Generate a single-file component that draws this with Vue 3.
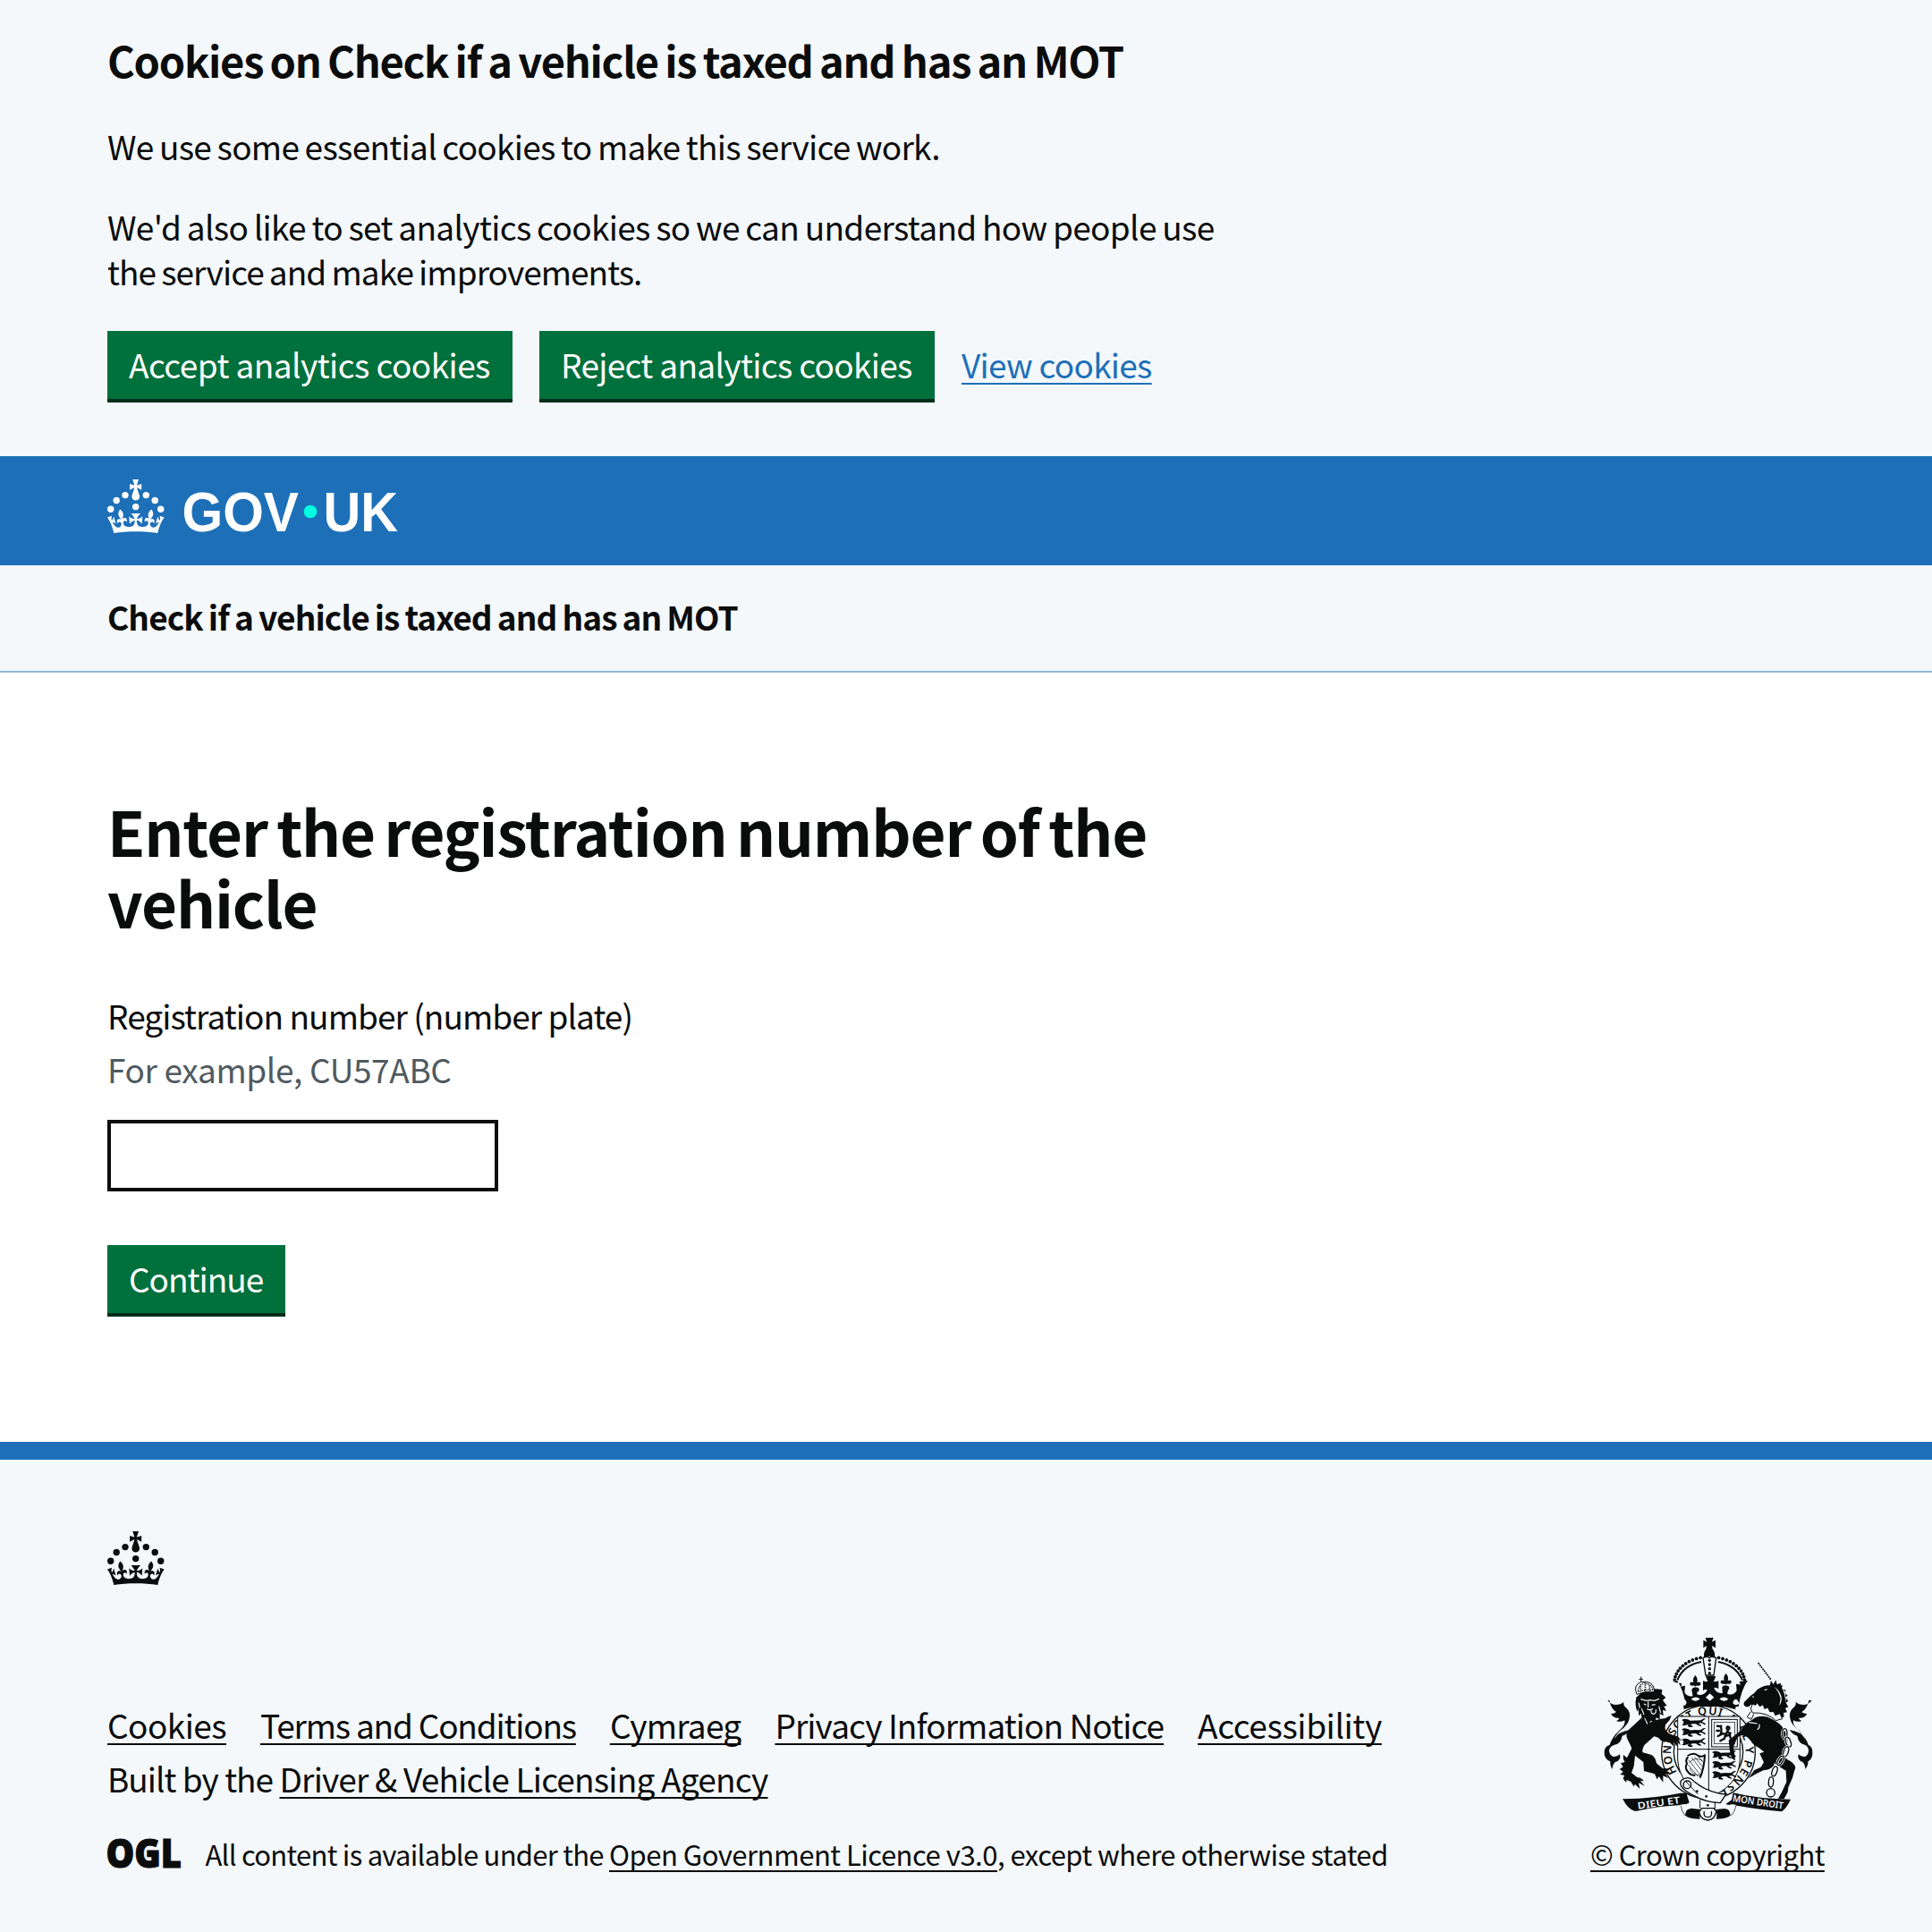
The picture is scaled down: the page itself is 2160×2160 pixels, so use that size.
<script setup>
const serviceName = 'Check if a vehicle is taxed and has an MOT'

const footerLinks = [
  { label: 'Cookies', cls: 'lk-cookies' },
  { label: 'Terms and Conditions', cls: 'lk-terms' },
  { label: 'Cymraeg', cls: 'lk-cymraeg' },
  { label: 'Privacy Information Notice', cls: 'lk-privacy' },
  { label: 'Accessibility', cls: 'lk-access' },
]

// Charges of the quartered shield: three lions passant per quarter
const lionRows = [
  { x: 328, y: 334 }, { x: 328, y: 366 }, { x: 328, y: 400 },
  { x: 430, y: 442 }, { x: 430, y: 476 }, { x: 430, y: 510 },
]

// Pearls along the arches of the large crown
const pearls = []
for (let i = 0; i < 11; i++) {
  const a = (Math.PI / 180) * (6 + i * 6.9)
  const dx = 118 * Math.cos(a)
  const dy = 86 * Math.sin(a)
  pearls.push({ x: 424 - dx, y: 212 - dy }, { x: 424 + dx, y: 212 - dy })
}

const chain = [
  [676, 384, 0], [688, 412, -20], [680, 444, 18], [662, 474, 30], [642, 510, 20], [630, 546, 4],
]
</script>

<template>
  <div class="page">
    <svg class="defs" width="0" height="0" aria-hidden="true">
      <symbol id="crown" viewBox="0 0 64 60">
        <circle cx="20" cy="17.6" r="3.7" />
        <circle cx="10.2" cy="23.5" r="3.7" />
        <circle cx="3.7" cy="33.2" r="3.7" />
        <circle cx="31.7" cy="30.6" r="3.7" />
        <circle cx="43.3" cy="17.6" r="3.7" />
        <circle cx="53.2" cy="23.5" r="3.7" />
        <circle cx="59.7" cy="33.2" r="3.7" />
        <path d="M33.1,9.8c.2-.1.3-.3.5-.5l4.6,2.4v-6.8l-4.6,1.5c-.1-.2-.3-.3-.5-.5l1.9-5.9h-6.7l1.9,5.9c-.2.1-.3.3-.5.5l-4.6-1.5v6.8l4.6-2.4c.1.2.3.3.5.5l-2.6,8c-.9,2.8,1.2,5.7,4.1,5.7h0c3,0,5.1-2.9,4.1-5.7l-2.6-8ZM37,37.9s-3.4,3.8-4.1,6.1c2.2,0,4.2-.5,6.4-2.8l-.7,8.5c-2-2.8-4.4-4.1-5.7-3.8.1,3.1.5,6.7,5.8,7.2,3.7.3,6.7-1.5,7-3.8.4-2.6-2-4.3-3.7-1.6-1.4-4.5,2.4-6.1,4.9-3.2-1.9-4.5-1.8-7.7,2.4-10.9,3,4,2.6,7.3-1.2,11.1,2.4-1.3,6.2,0,4,4.6-1.2-2.8-3.7-2.2-4.2.2-.3,1.7.7,3.7,3,4.2,1.9.3,4.7-.9,7-5.9-1.3,0-2.4.7-3.9,1.7l2.4-8c.6,2.3,1.4,3.7,2.2,4.5.6-1.6.5-2.8,0-5.3l5,1.8c-2.6,3.6-5.2,8.7-7.3,17.5-7.4-1.1-15.7-1.7-24.5-1.7h0c-8.8,0-17.1.6-24.5,1.7-2.1-8.9-4.7-13.9-7.3-17.5l5-1.8c-.5,2.5-.6,3.7,0,5.3.8-.8,1.6-2.3,2.2-4.5l2.4,8c-1.5-1-2.6-1.7-3.9-1.7,2.3,5,5.2,6.2,7,5.9,2.3-.4,3.3-2.4,3-4.2-.5-2.4-3-3.1-4.2-.2-2.2-4.6,1.6-6,4-4.6-3.7-3.7-4.2-7.1-1.2-11.1,4.2,3.2,4.3,6.4,2.4,10.9,2.5-2.8,6.3-1.3,4.9,3.2-1.8-2.7-4.1-1-3.7,1.6.3,2.3,3.3,4.1,7,3.8,5.4-.5,5.7-4.2,5.8-7.2-1.3-.2-3.7,1-5.7,3.8l-.7-8.5c2.2,2.3,4.2,2.7,6.4,2.8-.7-2.3-4.1-6.1-4.1-6.1h10.6Z" />
      </symbol>
      <symbol id="passant" viewBox="0 0 86 32" overflow="visible">
        <path d="M0 4q8-6 18-3 10 2 12 6 14-2 28-1 12 0 16-5 6-4 12 0-7 0-9 5l-5 5q8 3 14 8l-4 3q-8-7-16-7l-6 3 10 5-2 4q-12-3-17-9l-14 0-6 4 9 4-3 4q-14 0-16-6l4-5q-7 4-12 4-6 3-13-1l6-3q-4-5 2-8z" />
      </symbol>
    </svg>

    <section class="cookie-banner">
      <div class="container">
        <h2 class="banner-title">Cookies on {{ serviceName }}</h2>
        <p class="banner-essential">We use some essential cookies to make this service work.</p>
        <p class="banner-analytics">
          <span class="l1">We'd also like to set analytics cookies so we can understand how people use</span><br />
          <span class="l2">the service and make improvements.</span>
        </p>
        <div class="banner-actions">
          <button class="btn accept" type="button">Accept analytics cookies</button>
          <button class="btn reject" type="button">Reject analytics cookies</button>
          <a class="view">View cookies</a>
        </div>
      </div>
    </section>

    <header class="header">
      <div class="container">
        <svg class="logo" viewBox="0 0 324 60" width="324" height="60" role="img" aria-label="GOV.UK">
          <use href="#crown" width="64" height="60" />
          <text x="83.5" y="57.8" textLength="130.5" lengthAdjust="spacingAndGlyphs">GOV</text>
          <circle class="logo-dot" cx="227" cy="36" r="7.3" />
          <text x="241.5" y="57.8" textLength="83.5" lengthAdjust="spacingAndGlyphs">UK</text>
        </svg>
      </div>
    </header>

    <div class="service-nav">
      <div class="container"><span>{{ serviceName }}</span></div>
    </div>

    <main class="container main">
      <h1>Enter the registration number of the vehicle</h1>
      <label for="vrn">Registration number (number plate)</label>
      <div class="hint">For example, CU57ABC</div>
      <input id="vrn" type="text" />
      <button class="btn continue" type="button">Continue</button>
    </main>

    <footer class="footer">
      <div class="container">
        <svg class="footer-crown" width="64" height="60"><use href="#crown" width="64" height="60" /></svg>
        <div class="meta">
          <div class="meta-main">
            <nav class="links">
              <a v-for="l in footerLinks" :key="l.label" :class="l.cls">{{ l.label }}</a>
            </nav>
            <div class="built"><span>Built by the&nbsp;</span><a>Driver &amp; Vehicle Licensing Agency</a></div>
            <div class="licence">
              <svg class="ogl" viewBox="0 0 82 34" width="82" height="34">
                <text x="-1.5" y="32.8" textLength="84.5" lengthAdjust="spacingAndGlyphs">OGL</text>
              </svg>
              <p><span class="t1">All content is available under the&nbsp;</span><a>Open Government Licence v3.0</a><span class="t2">, except where otherwise stated</span></p>
            </div>
          </div>

          <div class="copyright">
            <svg class="arms" viewBox="24 50 786 640" width="262" height="213.33">
              <!-- Garter -->
              <circle cx="420" cy="445" r="157" class="ring" />
              <circle cx="420" cy="445" r="116" class="ring" />
              <path id="garter" d="M315 513A125 125 0 1 1 436 569" fill="none" />
              <text class="motto"><textPath href="#garter" textLength="312">HONI SOIT QUI</textPath></text>
              <text class="motto"><textPath href="#garter" startOffset="336" textLength="290">MAL Y PENSE</textPath></text>

              <!-- Shield -->
              <path class="paper line" d="M317 326H526V470Q522 560 421 598Q322 560 317 470z" />
              <path class="line" d="M421 326V598M317 436H526" />
              <use v-for="(l, i) in lionRows" :key="i" href="#passant" :x="l.x" :y="l.y" width="86" height="30" />
              <rect x="431" y="336" width="86" height="92" class="line" />
              <rect x="440" y="346" width="68" height="72" class="line thin" />
              <path class="rampant" d="M450 358q8 2 13 0M462 362q4 10 0 20l16 4 8-14q-8-6-2-12 8 0 6 8M478 386l-4 14-14 8M468 384l-16 8M476 392l16-4 2 10M484 380l10 2M456 374h-8" />
              <path class="bold-line" d="M352 462q-10 10-4 22-8 14 2 26 8 14 26 14" />
              <path class="bold-line" d="M350 458q22-14 36 0 12 6 24-4M408 456q-2 42-16 76" />
              <path class="line thin" d="M354 472l40 52M364 464l34 44M374 462l28 34M388 462l14 18M352 488l34 40M356 480q20-20 44-6M358 500q8 22 36 24" />

              <!-- Strap and buckle -->
              <path class="paper line3" d="M330 540q22-18 42 4 34 28 76 38 22 6 32 4l-20 30q-50-2-88-24-34-16-44-34-4-12 2-18z" />
              <circle cx="349" cy="555" r="13" class="line3" />
              <path class="line" d="M345 545l40 42M392 606v28M442 612v26" />
              <circle cx="382" cy="577" r="4" /><circle cx="413" cy="594" r="4" /><circle cx="418" cy="624" r="4" />

              <!-- Large crown -->
              <path d="M410 62h27l-5 14 12-6v26l-12-7 2 12h-22l2-12-11 7V70l12 6z" />
              <path d="M413 100q11-8 21 0 10 10 7 30l-18-6-17 6q-4-20 7-30z" />
              <circle v-for="(p, i) in pearls" :key="'p' + i" :cx="p.x" :cy="p.y" r="5.6" />
              <path class="bold-line" d="M316 204Q336 154 396 143M534 204Q512 154 453 143" />
              <path class="line3" d="M402 130q10-10 21 0 12-10 23 0l-8 58h-27z" />
              <circle cx="424" cy="138" r="5" /><circle cx="424" cy="152" r="5" /><circle cx="424" cy="166" r="5" /><circle cx="424" cy="181" r="5" />
              <path d="M303 211l28 4-3 12q6-4 14-4l-2 22q8 16 28 13 14-3 12-14-14 4-15-7 0-10 14-8-2-9-12-6-10 0-9-8 3-7 12-3-4-14 6-24 10 10 6 24 10-4 12 3 1 8-9 8-9-2-10 5 15 0 14 10-2 8-15 5 6 12 20 11 18-3 22-18-10-2-14 4V207q7 3 16 2-4-8-7-18h34q-4 10-7 18 9 1 16-2v27q-5-6-15-4 4 15 22 18 14 1 20-11-13 3-15-5-1-10 14-10-1-7-10-5-10 0-9-8 2-7 12-3-4-14 6-24 10 10 6 24 10-4 12 3 1 8-9 8-10-3-12 6 14-2 14 8-1 11-15 7-2 11 12 14 20 3 28-13l-2-22q8 0 14 4l-3-12 28-4q-22 30-31 88l-176 0q-9-58-30-88z" />
              <path d="M364 236h20l-4 24h-12zM466 236h20l-4 24h-12z" />
              <path class="paper" d="M325 284q10-26 20-10 6 10-8 14zM524 284q-10-26-20-10-6 10 8 14zM362 268q14-13 30-1-14 14-30 1zM457 267q16-12 30 1-16 13-30-1zM411 262l14-13 14 13-14 12z" />
              <path d="M336 290q88-28 177 0l-3 12q-85-26-172 0z" />

              <!-- Lion supporter -->
              <path d="M82 272q10 14 26 15 18 0 28-10-2 12 8 20 16 14 11 36-4 22-30 40-16 14-20 28 12-24 52-30-10 16-26 20-4 26-26 30-18 6-18 20 0 14 14 20 12 2 22-8 4 14-8 24-14 0-18 26-8-16-6-26-22-10-20-32 0-18 18-24 8-26 32-48 22-18 18-34-14 8-28 2 8-2 10-10-20 2-28-14 12 0 18-6-18-10-23-39z" />
              <path d="M214 352q30-18 62-20 10-8 20-8l-6 14-14 16q-8 24 24 34 22 2 31 22l-10-8 5 20-12-12 3 18-13-15-2 13-12-15-26-2-12-12-14-4-32 28q-10 16-6 26l22 6q20 4 24 30 10 10 22 18 10-4 22 4l-10 4 16 8-20 2 10 14-18-8 0 22-14-20-6 10-8-18-36-10-2-30-28-22-4 36-8 22 20 16q10-2 22 12l-12-2 14 18-20-10 4 20-16-16-4 8-10-16-14-6-2 8-10-12 4-12-14-2 10-10-12-8 12-8-8-12 14-4q-8-10-5-24l12 10 16-32-6-14q-20-34-7-46l52-48z" />
              <path d="M178 262q-6 26 4 48l4-10 0 24 8-8 4 22 9-8 12 24 8-14 14 8 4-18 12 6 0-20 12 8-2-20 12 4-8-16 10-2-14-18 10-10-14-12 2-14-18-2-40 2z" />
              <path class="cut" d="M193 268l18 5 12-2 16 2 16-6M204 284l8 4M242 286l-12 2M214 300q8 8 20 0M218 276v20M228 300q-2 18 8 18 10-2 8-16M196 300l8 20M254 292l6 22M186 280l4 18" />
              <path class="paper line" d="M180 252q-14-30 14-42 38-4 44 22l0 12q-30-4-58 8z" />
              <path class="line" d="M194 193v16M187 201h14" />
              <path class="dots" d="M184 240q4-24 24-26M234 236q-6-18-24-20M208 212v30M192 224l2 22M222 222l2 20M184 244q24-10 50-6" />

              <!-- Unicorn supporter -->
              <path class="horn" d="M587 146L630 203" />
              <path d="M562 256q12-6 22-20 22-16 42-14l4-16 8 12 8-14 4 14 14-4q-4 10 6 8l-4 10 14 6-6 8 12 10-8 6 10 12-8 6 8 14-10 4 6 14-12 2 2 14-14 0-4 8q-12-2-24-12l-26-20-20-14-24-4q-6 12-18 6-8-4-4-14z" />
              <path class="paper" d="M606 236l14-2-8 6zM640 226q24 16 26 42-2 14-8 22l4-24q-4-22-22-40zM666 222q16 26 14 60l-4-26zM566 258l8 2-4 4z" />
              <path class="paper line" d="M568 284l10 4 6-8 8 12 12-6 4 14 12-4 6 14 14 0 4 12 16-6 8 18-22 6q-28-28-78-26l-6-14z" />
              <path class="line" d="M562 310l-12 18 14 8 8-18" />
              <path d="M530 372q12-26 36-34 10-10 24-12 24-4 42 8 30 14 42 36 14 20 10 50l-8 24q-4 18 8 26 26 12 28 28-6 18-10 34l-14 32-2 16-12 22h-20l12-22 16-34-2-38-26-16q-20-12-26-30l-38-30q-20-10-28-24-14-20-30-18-12 0-18 14l-10 24 4 28 2 18-12-8-6-24-4-36z" />
              <path d="M592 450l32-10 20 20-4 30q-14 16-34 16-24 10-52 28l20-28 22-10 10-16q-8-16-14-30z" />
              <path class="cut" d="M556 346q16 2 28 4M590 352q4 12-6 18" />
              <path d="M767 272q-10 14-26 15-18 0-28-10 2 12-8 20-16 14-11 36 4 22 30 40 16 14 20 28-12-24-52-30 10 16 26 20 4 26 26 30 12 6 12 20 0 14-12 20-12 2-22-8-4 14 8 24 12 0 16 26 10-16 8-26 17-10 15-32 0-18-14-24-8-26-32-48-22-18-18-34 14 8 28 2-8-2-10-10 20 2 28-14-12 0-18-6 18-10 24-39z" />
              <g v-for="(c, i) in chain" :key="'c' + i" :transform="`rotate(${c[2]} ${c[0]} ${c[1]})`">
                <ellipse :cx="c[0]" :cy="c[1]" rx="8" ry="17" class="halo" />
                <ellipse :cx="c[0]" :cy="c[1]" rx="8" ry="17" class="line3" />
              </g>
              <circle cx="629" cy="582" r="14" class="line3" />

              <!-- Scroll -->
              <path d="M138 603q100-2 188-20h20l10 32q-8 6-26 8-80 4-150 20h-8q-24-8-40-42z" />
              <path d="M503 582q90 22 193 22-14 30-30 41-80-8-150-20-20 2-38-5l20-14z" />
              <path d="M330 624q10 8 30 10l34 4q-4 24-2 32-36 0-50-12-14-14-12-34zM508 624q-12 8-26 10l-36 4q4 24 0 32 34 0 48-12 14-14 14-34z" />
              <path class="paper" d="M326 622q24-6 36 14-18-2-20 22-14-14-16-36zM512 622q-24-6-38 14 18-2 20 22 16-14 18-36z" />
              <path class="line thin" d="M328 626q2 20 14 32M512 626q-2 20-16 32" />
              <path class="paper line3" d="M398 634h40l8 10q-4 28-28 30-24-2-29-28z" />
              <path class="line3" d="M406 644q-4 20 12 20t12-20" />
              <text class="scroll" transform="translate(184 637) rotate(-8)" textLength="143" lengthAdjust="spacingAndGlyphs">DIEU ET</text>
              <text class="scroll" transform="translate(500 611) rotate(8.5)" textLength="172" lengthAdjust="spacingAndGlyphs">MON DROIT</text>
            </svg>
            <a>© Crown copyright</a>
          </div>
        </div>
      </div>
    </footer>
  </div>
</template>

<style>
body { background: #f4f8fb; }
</style>

<style scoped>
.page {
  min-height: 2160px;
  display: flex;
  flex-direction: column;
  background: #fff;
  color: #0b0c0c;
  font: 400 37px/50px "Noto Sans CJK SC", "Noto Sans", sans-serif;
  font-kerning: normal;
}
.defs { position: absolute; }
.container { width: 1920px; margin: 0 auto; }
h1, h2, p { margin: 0; }
a {
  text-decoration: underline;
  text-decoration-thickness: 2px;
  text-underline-offset: 5px;
  text-decoration-skip-ink: none;
  white-space: nowrap;
}

.cookie-banner { height: 510px; background: #f4f8fb; }
.banner-title { padding-top: 37px; font-size: 47px; line-height: 60px; font-weight: 700; letter-spacing: -1.25px; word-spacing: -2px; }
.banner-essential { margin-top: 41px; letter-spacing: -.7px; word-spacing: -1.2px; }
.banner-analytics { margin-top: 40px; white-space: nowrap; }
.l1 { letter-spacing: -.67px; word-spacing: -1.1px; }
.l2 { letter-spacing: -.95px; word-spacing: -1.2px; }
.banner-actions { display: flex; gap: 30px; margin-top: 42px; }
.view { padding-top: 12px; letter-spacing: -.72px; color: #1d70b8; }

.btn {
  display: block;
  box-sizing: border-box;
  height: 80px;
  padding: 15px 0 17px 24px;
  border: 0;
  border-bottom: 4px solid #002d18;
  background: #00703c;
  color: #fff;
  font: inherit;
  line-height: 44px;
  text-align: left;
  white-space: nowrap;
}
.accept { width: 453px; letter-spacing: -.56px; }
.reject { width: 442px; letter-spacing: -.67px; }
.continue { width: 199px; margin-top: 60px; letter-spacing: -1px; }

.header { height: 122px; background: #1d70b8; }
.logo { display: block; padding-top: 26px; overflow: visible; fill: #fff; }
.logo text { font: 700 62.5px "Liberation Sans", Arial, sans-serif; }
.logo-dot { fill: #00ffe0; }

.service-nav { height: 118px; border-bottom: 2px solid #8eb8dc; background: #f4f8fb; }
.service-nav .container { padding-top: 32px; font-weight: 700; letter-spacing: -.9px; word-spacing: -1.5px; }

.main { flex: 1; padding-top: 136px; }
h1 { width: 1260px; font-size: 69px; line-height: 80px; font-weight: 700; letter-spacing: -1.15px; word-spacing: -4.2px; }
label { display: block; margin-top: 62px; letter-spacing: -.94px; }
.hint { margin-top: 10px; color: #505a5f; letter-spacing: -.37px; }
input {
  display: block;
  box-sizing: border-box;
  width: 437px;
  height: 80px;
  margin: 32px 0 0;
  border: 4px solid #0b0c0c;
  border-radius: 0;
  background: #fff;
}

.footer { box-sizing: border-box; height: 548px; padding-top: 80px; border-top: 20px solid #1d70b8; background: #f4f8fb; }
.footer-crown { display: block; fill: #0b0c0c; }
.meta { display: flex; justify-content: space-between; align-items: flex-end; height: 321px; }
.links { display: flex; gap: 38px; }
.built { display: flex; margin-top: 10px; }
.built span { letter-spacing: -.98px; }
.built a { letter-spacing: -.8px; }
.lk-cookies { letter-spacing: -.56px; }
.lk-terms { letter-spacing: -1.2px; }
.lk-cymraeg { letter-spacing: -.74px; }
.lk-privacy { letter-spacing: -.93px; }
.lk-access { letter-spacing: -.38px; }
.licence { display: flex; gap: 27.5px; margin-top: 40px; font-size: 31px; line-height: 40px; white-space: nowrap; }
.ogl { margin-top: 2px; overflow: visible; fill: #0b0c0c; }
.ogl text { font: 900 45px "Noto Sans", sans-serif; stroke: #0b0c0c; stroke-width: 1.2px; }
.t1 { letter-spacing: -.73px; }
.licence a { letter-spacing: -.49px; }
.t2 { letter-spacing: -.54px; }
.copyright { display: flex; flex-direction: column; gap: 13px; width: 262px; font-size: 31px; line-height: 40px; letter-spacing: -.55px; }

.arms { display: block; fill: #0b0c0c; letter-spacing: 0; }
.paper { fill: #f4f8fb; }
.ring { fill: #f4f8fb; stroke: #0b0c0c; stroke-width: 4; }
.line { stroke: #0b0c0c; stroke-width: 3; }
.line:not(.paper) { fill: none; }
.thin { stroke-width: 2; }
.line3 { stroke: #0b0c0c; stroke-width: 4; }
.line3:not(.paper) { fill: none; }
.bold-line { fill: none; stroke: #0b0c0c; stroke-width: 6; }
.rampant { fill: none; stroke: #0b0c0c; stroke-width: 7; stroke-linecap: round; }
.cut { fill: none; stroke: #f4f8fb; stroke-width: 3.5; }
.halo { fill: none; stroke: #f4f8fb; stroke-width: 9; }
.horn { fill: none; stroke: #0b0c0c; stroke-width: 5; stroke-dasharray: 6 2; }
.dots { fill: none; stroke: #0b0c0c; stroke-width: 4; stroke-dasharray: 4 3; }
.motto { font: 600 38px "Noto Sans", sans-serif; }
.scroll { fill: #f4f8fb; font: 600 32px "Noto Sans", sans-serif; }
</style>
